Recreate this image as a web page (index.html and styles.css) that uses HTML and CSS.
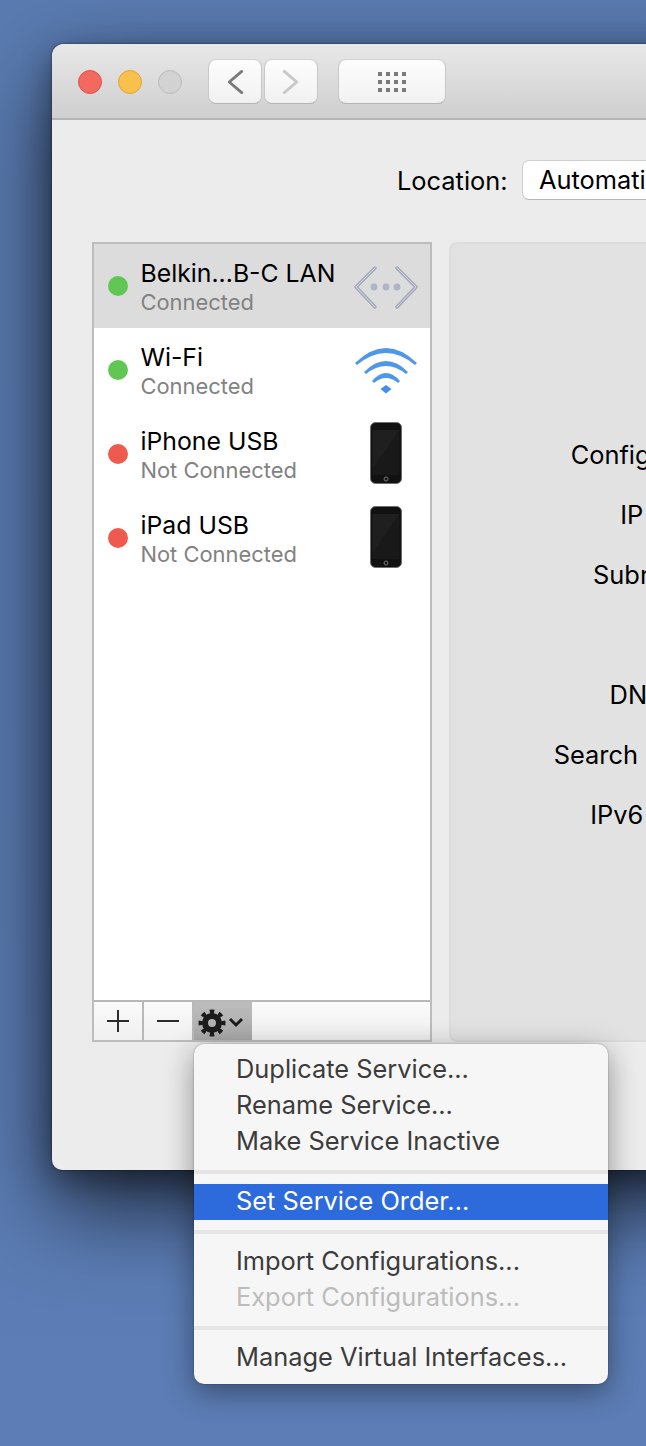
FILE: index.html
```html
<!DOCTYPE html>
<html lang="en">
<head>
<meta charset="utf-8">
<title>Network</title>
<link rel="stylesheet" href="styles.css">
</head>
<body>
<main class="window">
  <header class="titlebar">
    <div class="lights">
      <span class="light light-red"></span>
      <span class="light light-yellow"></span>
      <span class="light light-grey"></span>
    </div>
    <div class="nav">
      <button class="tool tool-nav"><svg width="54" height="44" viewBox="0 0 54 44"><polyline points="34,11 21,22 34,33" class="chev chev-on"/></svg></button>
      <button class="tool tool-nav"><svg width="54" height="44" viewBox="0 0 54 44"><polyline points="20,11 33,22 20,33" class="chev chev-off"/></svg></button>
    </div>
    <button class="tool tool-grid">
      <svg width="30" height="22" viewBox="0 0 30 22" class="grid-icon">
        <rect x="1" y="1" width="4" height="4"/><rect x="9" y="1" width="4" height="4"/><rect x="17" y="1" width="4" height="4"/><rect x="25" y="1" width="4" height="4"/>
        <rect x="1" y="9" width="4" height="4"/><rect x="9" y="9" width="4" height="4"/><rect x="17" y="9" width="4" height="4"/><rect x="25" y="9" width="4" height="4"/>
        <rect x="1" y="17" width="4" height="4"/><rect x="9" y="17" width="4" height="4"/><rect x="17" y="17" width="4" height="4"/><rect x="25" y="17" width="4" height="4"/>
      </svg>
    </button>
  </header>
  <div class="content">
    <div class="location">
      <span class="location-label">Location:</span>
      <div class="select">Automatic</div>
    </div>
    <div class="panes">
      <aside class="sidebar">
        <ul class="services">
          <li class="service service-selected">
            <span class="dot dot-green"></span>
            <div class="service-text"><div class="service-name">Belkin...B-C LAN</div><div class="service-status">Connected</div></div>
            <svg class="service-icon" width="64" height="84" viewBox="354 244 64 84">
              <polyline points="375,268 356,287 375,307" class="net-line"/>
              <polyline points="397,268 416,287 397,307" class="net-line"/>
              <polyline points="375,268 356,287 375,307" class="net-shine"/>
              <polyline points="397,268 416,287 397,307" class="net-shine"/>
              <circle cx="374" cy="287" r="3.4" class="net-dot"/><circle cx="386" cy="287" r="3.4" class="net-dot"/><circle cx="397" cy="287" r="3.4" class="net-dot"/>
            </svg>
          </li>
          <li class="service">
            <span class="dot dot-green"></span>
            <div class="service-text"><div class="service-name">Wi-Fi</div><div class="service-status">Connected</div></div>
            <svg class="service-icon" width="64" height="84" viewBox="354 328 64 84">
              <path d="M355 363Q386 333 417 363L415 365Q386 341 357 365Z" class="wifi-arc"/>
              <path d="M364 372Q386 350 408 372L406 374Q386 358 366 374Z" class="wifi-arc"/>
              <path d="M372 381Q386 365 400 381L398 383Q386 373 374 383Z" class="wifi-arc"/>
              <path d="M380.500 389L386 385L391.500 389L386 393.500Z" class="wifi-tip"/>
            </svg>
          </li>
          <li class="service">
            <span class="dot dot-red"></span>
            <div class="service-text"><div class="service-name">iPhone USB</div><div class="service-status">Not Connected</div></div>
            <svg class="service-icon" width="64" height="84" viewBox="354 412 64 84">
              <rect x="370.500" y="422.500" width="31" height="61" rx="5" class="phone-body"/>
              <rect x="372.500" y="430" width="27" height="45" class="phone-screen"/>
              <path d="M372.500 430H399.500L372.500 468Z" class="phone-glare"/>
              <circle cx="386" cy="479" r="2" class="phone-home"/>
            </svg>
          </li>
          <li class="service">
            <span class="dot dot-red"></span>
            <div class="service-text"><div class="service-name">iPad USB</div><div class="service-status">Not Connected</div></div>
            <svg class="service-icon" width="64" height="84" viewBox="354 412 64 84">
              <rect x="370.500" y="422.500" width="31" height="61" rx="5" class="phone-body"/>
              <rect x="372.500" y="430" width="27" height="45" class="phone-screen"/>
              <path d="M372.500 430H399.500L372.500 468Z" class="phone-glare"/>
              <circle cx="386" cy="479" r="2" class="phone-home"/>
            </svg>
          </li>
        </ul>
        <div class="toolbar">
          <button class="tb-btn"><svg width="48" height="38" viewBox="0 0 48 38"><path d="M13 19H35M24 8V30" class="tb-glyph"/></svg></button>
          <button class="tb-btn"><svg width="48" height="38" viewBox="0 0 48 38"><path d="M13 19H35" class="tb-glyph"/></svg></button>
          <button class="tb-btn tb-gear">
            <svg width="58" height="38" viewBox="0 0 58 38">
              <circle cx="18" cy="21" r="7" class="gear-ring"/>
              <circle cx="18" cy="21" r="11" pathLength="32" class="gear-teeth"/>
              <polyline points="36,17 42,23 48,17" class="gear-chev"/>
            </svg>
          </button>
        </div>
      </aside>
      <section class="detail">
        <div class="field">Configure IPv6:</div>
        <div class="field">IP Address:</div>
        <div class="field">Subnet Mask:</div>
        <div class="field">Router:</div>
        <div class="field">DNS Server:</div>
        <div class="field">Search Domains:</div>
        <div class="field">IPv6 Address:</div>
      </section>
    </div>
  </div>
</main>
<nav class="menu">
  <div class="menu-item">Duplicate Service...</div>
  <div class="menu-item">Rename Service...</div>
  <div class="menu-item">Make Service Inactive</div>
  <div class="menu-sep menu-sep-first"></div>
  <div class="menu-item menu-item-active">Set Service Order...</div>
  <div class="menu-sep menu-sep-second"></div>
  <div class="menu-item">Import Configurations...</div>
  <div class="menu-item menu-item-off">Export Configurations...</div>
  <div class="menu-sep"></div>
  <div class="menu-item">Manage Virtual Interfaces...</div>
</nav>
</body>
</html>
```
FILE: styles.css
```css
* { box-sizing: border-box; }
html, body { margin: 0; height: 1446px; overflow: hidden; }
body {
  position: relative;
  width: 646px;
  padding: 44px 0 0 52px;
  background: linear-gradient(180deg, #5a7bb1 0%, #5a7bb2 60%, #5c7db5 100%);
  font-family: Inter, "Liberation Sans", sans-serif;
  color: #000;
}
button { padding: 0; margin: 0; font: inherit; }
ul { margin: 0; padding: 0; list-style: none; }

.window {
  width: 900px;
  height: 1126px;
  border-radius: 12px 12px 10px 10px;
  background: #ececec;
  box-shadow: 0 36px 90px rgba(0, 0, 0, .7), 0 10px 30px rgba(0, 0, 0, .35), 0 0 3px rgba(0, 0, 0, .5);
  overflow: hidden;
}
.titlebar {
  display: flex;
  align-items: flex-start;
  height: 76px;
  padding: 15px 0 0 26px;
  background: linear-gradient(180deg, #e8e8e8 0%, #cfcfcf 100%);
  border-bottom: 2px solid #b4b4b4;
}
.lights { display: flex; gap: 16px; padding-top: 11px; }
.light { width: 24px; height: 24px; border-radius: 50%; border: 1px solid; }
.light-red { background: #f1695f; border-color: #dc5248; }
.light-yellow { background: #f8c14d; border-color: #dfa53a; }
.light-grey { background: #d2d2d2; border-color: #bcbcbc; }
.nav { display: flex; gap: 2px; margin-left: 26px; }
.tool {
  display: flex;
  align-items: center;
  justify-content: center;
  height: 45px;
  border: 1px solid #c8c8c8;
  border-top-color: #d2d2d2;
  border-bottom-color: #b4b4b4;
  border-radius: 8px;
  background: linear-gradient(180deg, #fdfdfd 0%, #f1f1f1 100%);
}
.tool-nav { width: 54px; }
.tool-grid { width: 108px; margin-left: 20px; }
.chev { fill: none; stroke-width: 3; stroke-linecap: round; stroke-linejoin: round; }
.chev-on { stroke: #7a7a7a; }
.chev-off { stroke: #c8c8c8; }
.grid-icon { fill: #7b7b7b; }

.content { padding: 40px 0 0 40px; }
.location { display: flex; align-items: center; height: 40px; padding-left: 305px; }
.location-label { font-size: 25.400px; width: 125px; padding-top: 1px; white-space: nowrap; }
.select {
  width: 260px;
  height: 40px;
  padding: 0 0 0 16px;
  line-height: 38px;
  font-size: 25.400px;
  white-space: nowrap;
  background: #fff;
  border: 1px solid #cfcfcf;
  border-bottom-color: #b8b8b8;
  border-radius: 7px;
}
.panes { display: flex; gap: 17px; margin-top: 42px; height: 800px; }
.sidebar {
  display: flex;
  flex-direction: column;
  width: 340px;
  border: 2px solid #bdbdbd;
  background: #fff;
}
.services { flex: 1; }
.service { display: flex; align-items: center; height: 84px; padding-left: 14px; }
.service-selected { background: #dcdcdc; }
.dot { width: 20px; height: 20px; border-radius: 50%; flex: none; }
.dot-green { background: #62c654; }
.dot-red { background: #ee5a4f; }
.service-text { flex: 1; padding: 2px 0 0 12.500px; white-space: nowrap; }
.service-name { font-size: 24.800px; line-height: 30px; }
.service-status { font-size: 21.900px; line-height: 28px; color: #828282; }
.service-icon { flex: none; margin-right: 12px; display: block; }
.net-line { fill: none; stroke: #a5abbb; stroke-width: 3.500; stroke-linecap: round; stroke-linejoin: round; }
.net-shine { fill: none; stroke: #d3d6df; stroke-width: 1; stroke-linecap: round; stroke-linejoin: round; }
.net-dot { fill: #aeb4c6; }
.wifi-arc { fill: #4f98e8; }
.wifi-tip { fill: #3f8ef0; }
.phone-body { fill: #111; stroke: #6f6f6f; }
.phone-screen { fill: #191919; }
.phone-glare { fill: #1f1f1f; }
.phone-home { fill: #141414; stroke: #777; }

.toolbar {
  display: flex;
  height: 40px;
  border-top: 2px solid #b8b8b8;
  background: linear-gradient(180deg, #fafafa 0%, #f0f0f0 100%);
}
.tb-btn {
  display: flex;
  align-items: center;
  justify-content: center;
  width: 50px;
  border: 0;
  border-right: 2px solid #b8b8b8;
  background: transparent;
}
.tb-gear { width: 58px; border-right: 0; background: linear-gradient(180deg, #bdbdbd 0%, #a9a9a9 100%); }
.tb-glyph { fill: none; stroke: #2c2c2c; stroke-width: 2; }
.gear-ring { fill: none; stroke: #1c1c1c; stroke-width: 6; }
.gear-teeth { fill: none; stroke: #1c1c1c; stroke-width: 5; stroke-dasharray: 2 2; stroke-dashoffset: 1; }
.gear-chev { fill: none; stroke: #1c1c1c; stroke-width: 3; }

.detail {
  width: 420px;
  padding: 181px 0 0 0;
  background: #e2e2e2;
  border: 2px solid #dcdcdc;
  border-radius: 8px;
}
.field {
  height: 60px;
  line-height: 60px;
  padding-right: 110px;
  text-align: right;
  font-size: 25.400px;
  white-space: nowrap;
}

.menu {
  position: absolute;
  left: 194px;
  top: 1044px;
  width: 414px;
  height: 340px;
  padding: 7px 0 9px;
  background: #f6f6f6;
  border-radius: 10px;
  box-shadow: 0 8px 30px rgba(0, 0, 0, .4), 0 0 2px rgba(0, 0, 0, .35);
}
.menu-item {
  height: 36px;
  line-height: 36px;
  padding-left: 42px;
  font-size: 25.400px;
  white-space: nowrap;
  color: #3c3c3c;
}
.menu-item-active { line-height: 34px; background: #2d6bdc; color: #fff; }
.menu-item-off { color: #bcbcbc; }
.menu-sep { height: 4px; margin: 11px 0 9px; background: #e5e5e5; }
.menu-sep-first { margin-bottom: 10px; }
.menu-sep-second { margin-top: 10px; }
```
